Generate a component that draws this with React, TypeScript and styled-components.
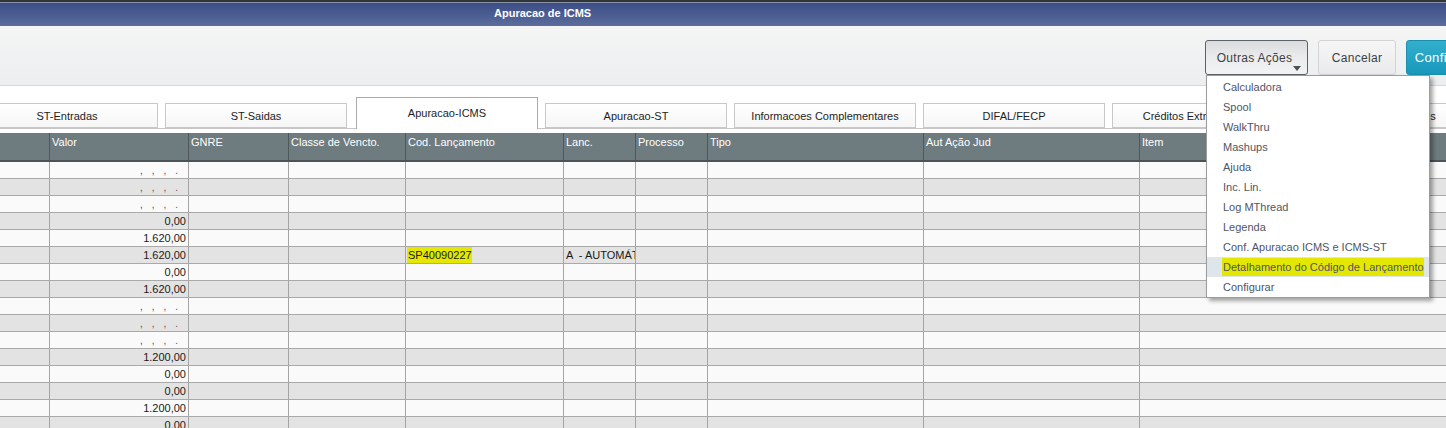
import React from "react";
import styled, { createGlobalStyle } from "styled-components";

const GlobalStyle = createGlobalStyle`
  html, body {
    margin: 0;
    padding: 0;
    background: #ffffff;
    overflow: hidden;
  }
  body {
    font-family: "Liberation Sans", Arial, sans-serif;
    font-size: 11px;
    color: #1a1a1a;
  }
  * {
    box-sizing: border-box;
  }
`;

const TABS = [
  "ST-Entradas",
  "ST-Saidas",
  "Apuracao-ICMS",
  "Apuracao-ST",
  "Informacoes Complementares",
  "DIFAL/FECP",
  "Créditos Extra-Apuração",
  "Débitos Especiais",
];

const COLUMNS = [
  { title: "", width: 50 },
  { title: "Valor", width: 139 },
  { title: "GNRE", width: 100 },
  { title: "Classe de Vencto.", width: 117 },
  { title: "Cod. Lançamento", width: 158 },
  { title: "Lanc.", width: 72 },
  { title: "Processo", width: 72 },
  { title: "Tipo", width: 216 },
  { title: "Aut Ação Jud", width: 216 },
  { title: "Item", width: 340 },
];

const GRID = COLUMNS.map((c) => `${c.width}px`).join(" ") + " 1fr";

type Row = { valor: string | null; cod?: string; lanc?: string };

// null = empty numeric mask, rendered as ", , , ."
const ROWS: Row[] = [
  { valor: null },
  { valor: null },
  { valor: null },
  { valor: "0,00" },
  { valor: "1.620,00" },
  { valor: "1.620,00", cod: "SP40090227", lanc: "A  - AUTOMÁTICO" },
  { valor: "0,00" },
  { valor: "1.620,00" },
  { valor: null },
  { valor: null },
  { valor: null },
  { valor: "1.200,00" },
  { valor: "0,00" },
  { valor: "0,00" },
  { valor: "1.200,00" },
  { valor: "0,00" },
];

const MENU = [
  "Calculadora",
  "Spool",
  "WalkThru",
  "Mashups",
  "Ajuda",
  "Inc. Lin.",
  "Log MThread",
  "Legenda",
  "Conf. Apuracao ICMS e ICMS-ST",
  "Detalhamento do Código de Lançamento",
  "Configurar",
];

export default function App() {
  return (
    <>
      <GlobalStyle />
      <Page>
        <TitleBar>
          <Title>Apuracao de ICMS</Title>
        </TitleBar>

        <Toolbar>
          <MenuAnchor>
            <ActionsButton>
              Outras Ações
              <Caret />
            </ActionsButton>
            <Menu>
              {MENU.map((item) => {
                const marked = item.startsWith("Detalhamento");
                return (
                  <MenuItem key={item} $active={marked}>
                    {marked ? <MenuMarker>{item}</MenuMarker> : item}
                  </MenuItem>
                );
              })}
            </Menu>
          </MenuAnchor>
          <Button>Cancelar</Button>
          <PrimaryButton>Confirmar</PrimaryButton>
        </Toolbar>

        <TabStrip>
          {TABS.map((t) => (
            <Tab key={t} $active={t === "Apuracao-ICMS"}>
              {t}
            </Tab>
          ))}
        </TabStrip>

        <Grid>
          <HeaderRow>
            {COLUMNS.map((c, i) => (
              <HeadCell key={i}>{c.title}</HeadCell>
            ))}
            <HeadCell />
          </HeaderRow>
          {ROWS.map((r, i) => (
            <DataRow key={i} $odd={i % 2 === 1}>
              <Cell />
              <NumCell>
                {r.valor === null ? (
                  <Mask>
                    <span>,</span>
                    <span>,</span>
                    <span>,</span>
                    <span>.</span>
                  </Mask>
                ) : (
                  r.valor
                )}
              </NumCell>
              <Cell />
              <Cell />
              <Cell>{r.cod && <Marker>{r.cod}</Marker>}</Cell>
              <Cell>{r.lanc}</Cell>
              <Cell />
              <Cell />
              <Cell />
              <Cell />
              <Cell />
            </DataRow>
          ))}
        </Grid>
      </Page>
    </>
  );
}

const Page = styled.div`
  width: 1500px;
  height: 428px;
  overflow: hidden;
`;

const TitleBar = styled.div`
  height: 26px;
  border-top: 2px solid #333638;
  box-shadow: inset 0 1px 0 #8690a8;
  background: linear-gradient(180deg, #3b4d86 0%, #4a5b90 50%, #5c6d9c 100%);
  display: flex;
  align-items: center;
  padding-left: 494px;
`;

const Title = styled.span`
  color: #ffffff;
  font-size: 11px;
  font-weight: 700;
  margin-top: -2px;
`;

const Toolbar = styled.div`
  height: 60px;
  background: linear-gradient(180deg, #f4f5f4 0%, #eceef0 100%);
  border-bottom: 1px solid #d5d7d8;
  display: flex;
  justify-content: flex-end;
  align-items: flex-start;
  gap: 10px;
  padding: 14px 16px 0 0;
`;

const MenuAnchor = styled.div`
  position: relative;
`;

const BaseButton = styled.div`
  height: 35px;
  display: flex;
  align-items: center;
  justify-content: center;
  font-size: 12px;
  letter-spacing: 0.3px;
  border-radius: 3px;
  white-space: nowrap;
`;

const ActionsButton = styled(BaseButton)`
  position: relative;
  width: 103px;
  color: #3c3f44;
  border: 1px solid #5e6266;
  background: linear-gradient(180deg, #d9dbdc 0%, #e9eaeb 45%, #f2f3f3 100%);
  padding-right: 4px;
`;

const Caret = styled.span`
  position: absolute;
  right: 6px;
  bottom: 3px;
  width: 0;
  height: 0;
  border-left: 4px solid transparent;
  border-right: 4px solid transparent;
  border-top: 5px solid #4d5054;
`;

const Button = styled(BaseButton)`
  width: 78px;
  color: #3c3f44;
  border: 1px solid #d2d4d6;
  background: linear-gradient(180deg, #f6f6f6 0%, #e9eaeb 100%);
`;

const PrimaryButton = styled(BaseButton)`
  width: 78px;
  color: #ffffff;
  font-size: 13px;
  letter-spacing: 0.4px;
  border: 1px solid #1b8fb0;
  background: linear-gradient(180deg, #33afcd 0%, #1898bb 100%);
`;

const Menu = styled.div`
  position: absolute;
  top: 100%;
  left: 1px;
  width: 224px;
  z-index: 10;
  background: #ffffff;
  border: 1px solid #9c9c9c;
  box-shadow: 3px 3px 4px rgba(0, 0, 0, 0.35);
  padding: 1px 0 0;
`;

const MenuItem = styled.div<{ $active?: boolean }>`
  height: 20px;
  display: flex;
  align-items: center;
  padding-left: 16px;
  font-size: 11px;
  color: #4f5566;
  background: ${(p) => (p.$active ? "#dee5eb" : "transparent")};
`;

const Marker = styled.span`
  background: #e4e800;
  padding: 2px 0 2px 1px;
  margin-left: -1px;
`;

const MenuMarker = styled(Marker)`
  padding: 3px 0 3px 1px;
`;

const TabStrip = styled.div`
  display: flex;
  align-items: flex-end;
  gap: 7px;
  margin-left: -24px;
  padding-top: 11px;
  border-bottom: 1px solid #c6c6c6;
  height: 43px;
`;

const Tab = styled.div<{ $active?: boolean }>`
  flex: 0 0 182px;
  height: ${(p) => (p.$active ? "32px" : "25px")};
  margin: ${(p) => (p.$active ? "0 0 -1px 2px" : "0")};
  display: flex;
  justify-content: center;
  align-items: ${(p) => (p.$active ? "flex-start" : "center")};
  padding-top: ${(p) => (p.$active ? "9px" : "1px")};
  font-size: 11px;
  color: #1e1e1e;
  white-space: nowrap;
  overflow: hidden;
  background: ${(p) =>
    p.$active ? "#ffffff" : "linear-gradient(180deg, #ffffff 0%, #f6f6f6 100%)"};
  border: 1px solid ${(p) => (p.$active ? "#a9a9a9" : "#c8c8c8")};
  border-bottom: ${(p) => (p.$active ? "none" : "1px solid #c8c8c8")};
`;

const Grid = styled.div`
  margin-top: 4px;
`;

const HeaderRow = styled.div`
  display: grid;
  grid-template-columns: ${GRID};
  height: 29px;
  background: #6e7b7f;
  border-bottom: 2px solid #4b5356;
`;

const HeadCell = styled.div`
  color: #ffffff;
  font-size: 11px;
  padding: 3px 0 0 2px;
  border-right: 1px solid #4f595c;
  white-space: nowrap;
  overflow: hidden;
`;

const DataRow = styled.div<{ $odd?: boolean }>`
  display: grid;
  grid-template-columns: ${GRID};
  height: 17px;
  background: ${(p) => (p.$odd ? "#e3e3e3" : "#fafafa")};
  border-bottom: 1px solid #a9a9a9;
`;

const Cell = styled.div`
  font-size: 11px;
  line-height: 16px;
  padding-left: 2px;
  border-right: 1px solid #a4a4a4;
  white-space: pre;
  overflow: hidden;
`;

const NumCell = styled(Cell)`
  display: flex;
  justify-content: flex-end;
  padding: 0 2px 0 0;
`;

const Mask = styled.span`
  display: flex;
  gap: 9px;
  padding-right: 8px;
  color: #6a4848;
  font-size: 10px;
  line-height: 17px;
`;
